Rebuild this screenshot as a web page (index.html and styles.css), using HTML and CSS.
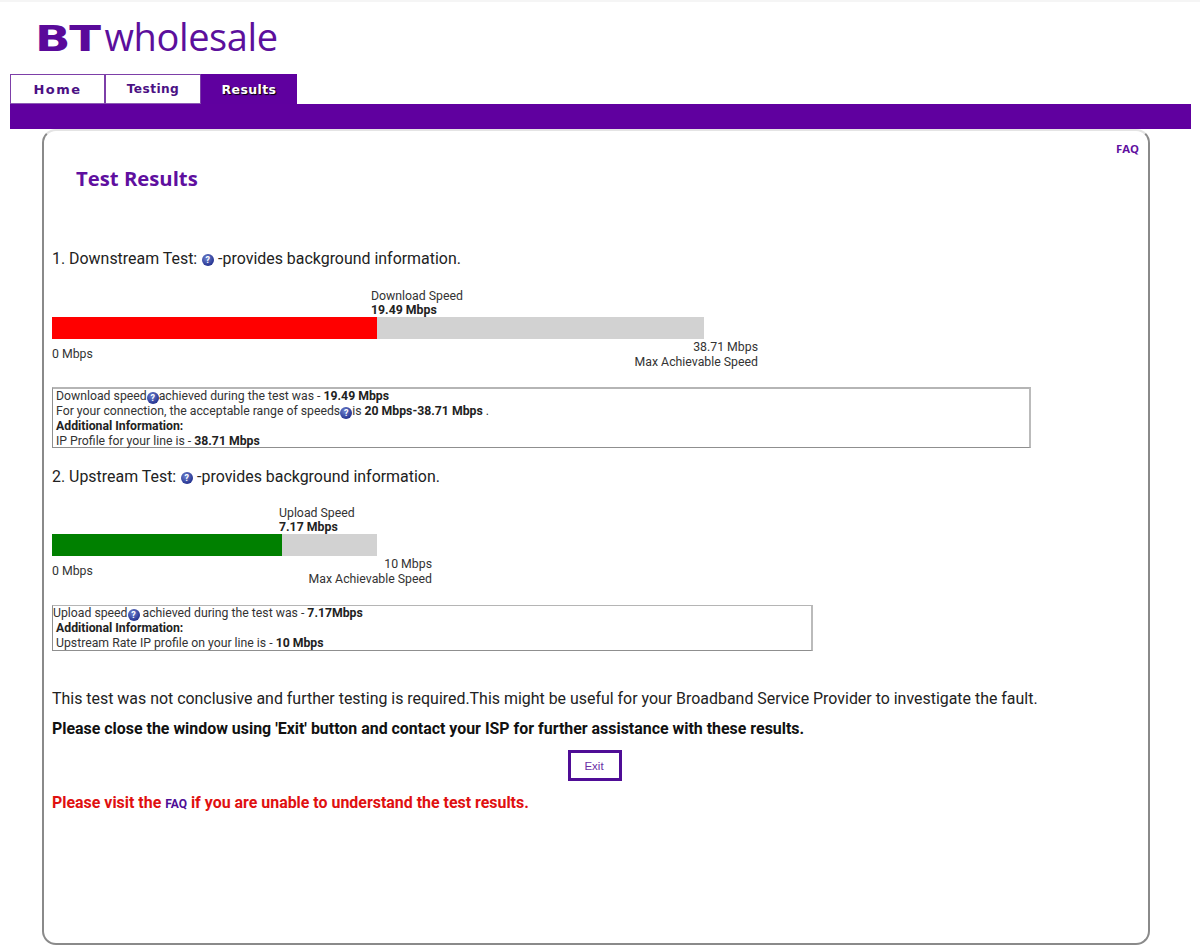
FILE: index.html
```html
<!DOCTYPE html>
<html lang="en">
<head>
<meta charset="utf-8">
<title>BT Wholesale - Test Results</title>
<link rel="stylesheet" href="styles.css">
</head>
<body>
<header class="brand">
  <span class="brand-bt">BT</span><span class="brand-name">wholesale</span>
</header>
<nav class="tabs">
  <a class="tab tab-home">Home</a>
  <a class="tab tab-testing">Testing</a>
  <a class="tab tab-active">Results</a>
</nav>
<div class="band"></div>
<main class="panel">
  <a class="faq-top">FAQ</a>
  <h1 class="title">Test Results</h1>

  <h2 class="test-head test-down">1. Downstream Test: <span class="help help-lg">?</span> -provides background information.</h2>
  <div class="meter meter-down">
    <div class="meter-label" style="padding-left:319px">Download Speed<br><b>19.49 Mbps</b></div>
    <div class="track" style="width:652px"><div class="fill fill-red" style="width:325px"></div></div>
    <div class="scale"><span>0 Mbps</span><span class="scale-max">38.71 Mbps<br>Max Achievable Speed</span></div>
  </div>
  <div class="info info-down">
    Download speed<span class="help">?</span>achieved during the test was - <b>19.49 Mbps</b><br>
    For your connection, the acceptable range of speeds<span class="help">?</span>is <b>20 Mbps-38.71 Mbps</b> .<br>
    <b>Additional Information:</b><br>
    IP Profile for your line is - <b>38.71 Mbps</b>
  </div>

  <h2 class="test-head test-up">2. Upstream Test: <span class="help help-lg">?</span> -provides background information.</h2>
  <div class="meter meter-up">
    <div class="meter-label" style="padding-left:227px">Upload Speed<br><b>7.17 Mbps</b></div>
    <div class="track" style="width:325px"><div class="fill fill-green" style="width:230px"></div></div>
    <div class="scale"><span>0 Mbps</span><span class="scale-max">10 Mbps<br>Max Achievable Speed</span></div>
  </div>
  <div class="info info-up">
    <span class="flush">Upload speed</span><span class="help">?</span> achieved during the test was - <b>7.17Mbps</b><br>
    <b>Additional Information:</b><br>
    Upstream Rate IP profile on your line is - <b>10 Mbps</b>
  </div>

  <p class="verdict">This test was not conclusive and further testing is required.This might be useful for your Broadband Service Provider to investigate the fault.</p>
  <p class="advice">Please close the window using 'Exit' button and contact your ISP for further assistance with these results.</p>
  <div class="exit-row"><button class="exit" type="button">Exit</button></div>
  <p class="visit">Please visit the <a class="faq-inline">FAQ</a> if you are unable to understand the test results.</p>
</main>
</body>
</html>
```

FILE: styles.css
```css
* { box-sizing: border-box; }
html, body { margin: 0; padding: 0; background: #fff; }
body {
  height: 950px;
  overflow: hidden;
  font-family: Roboto, "Liberation Sans", sans-serif;
  color: #222;
  border-top: 2px solid #f5f5f5;
}

.brand {
  height: 72px;
  padding: 12px 0 0 35px;
  display: flex;
  align-items: baseline;
  color: #5c0f9c;
  line-height: 44px;
}
.brand-bt {
  display: inline-block;
  font-family: "DejaVu Sans", sans-serif;
  font-weight: 700;
  font-size: 35px;
  letter-spacing: -1px;
  color: #5a0a9a;
  margin-right: 21px;
  transform: scaleX(1.33);
  transform-origin: left center;
}
.brand-name {
  font-family: "Open Sans", sans-serif;
  font-size: 38px;
  letter-spacing: -0.4px;
}

.tabs {
  display: flex;
  margin-left: 10px;
  height: 30px;
}
.tab {
  width: 95px;
  border: 1px solid #7d3fa8;
  border-bottom: 1px solid #8d5bb5;
  background: #fff;
  color: #4b1184;
  font-family: "DejaVu Sans", sans-serif;
  font-weight: 700;
  font-size: 13px;
  letter-spacing: 0.4px;
  display: flex;
  align-items: center;
  justify-content: center;
}
.tab-home { letter-spacing: 1.5px; }
.tab-testing { width: 96px; font-size: 12.2px; }
.tab-active {
  width: 96px;
  font-size: 12.5px;
  background: #5f009f;
  color: #fff;
  border-color: #5f009f;
  text-shadow: 1px 1px 1px #000;
}
.band {
  margin-left: 10px;
  width: 1181px;
  height: 25px;
  background: #60009f;
}

.panel {
  position: relative;
  margin-left: 42px;
  width: 1108px;
  height: 816px;
  border: 2px solid #8a8a8a;
  border-top-color: #e4e4e4;
  border-radius: 14px;
  padding: 0 8px;
}
.faq-top {
  position: absolute;
  top: 10px;
  right: 9px;
  font-family: "Open Sans", sans-serif;
  font-weight: 700;
  font-size: 11.3px;
  color: #5f0f9f;
}
.title {
  margin: 32px 0 0 24px;
  font-family: "Open Sans", sans-serif;
  font-size: 20.3px;
  line-height: 30px;
  font-weight: 700;
  color: #5f0f9f;
}
.test-head {
  margin: 0;
  font-weight: 400;
  font-size: 15.93px;
  line-height: 20px;
  color: #222;
}
.test-down { margin-top: 56px; }
.test-up { margin-top: 19px; }

.meter { margin-top: 20px; width: 706px; font-size: 12.3px; line-height: 14px; color: #333; }
.meter-up { margin-top: 19px; width: 380px; }
.meter-label b { color: #222; }
.track { height: 22px; background: #d2d2d2; }
.fill { height: 100%; }
.fill-red { background: #ff0000; }
.fill-green { background: #008000; }
.scale { display: flex; justify-content: space-between; align-items: center; height: 30px; line-height: 15px; }
.scale-max { text-align: right; margin-top: 2px; }

.info {
  margin-top: 18px;
  border: 1px solid #8f8f8f;
  border-top: 2px solid #b5b5b5;
  border-right: 2px solid #bbb;
  padding: 0 0 0 3px;
  font-size: 12.25px;
  line-height: 14.6px;
  color: #333;
}
.info b { color: #222; }
.info-down { width: 979px; height: 61px; }
.info-up { width: 761px; height: 46px; margin-top: 19px; border-top-width: 1px; }
.flush { margin-left: -3px; }

.help {
  display: inline-block;
  width: 12px;
  height: 12px;
  border-radius: 50%;
  background: radial-gradient(circle at 40% 35%, #6f83cf, #23318f 75%);
  color: #fff;
  font-size: 9px;
  font-weight: 700;
  line-height: 12px;
  text-align: center;
  vertical-align: -1px;
}
.help-lg { margin: 0 0.5px; vertical-align: 1px; }

.verdict { margin: 38px 0 0; font-size: 15.93px; line-height: 20px; color: #222; }
.advice { margin: 10px 0 0; font-size: 15.93px; line-height: 20px; font-weight: 700; color: #111; }
.exit-row { margin-top: 11px; display: flex; justify-content: center; padding-right: 2px; }
.exit {
  width: 54px;
  height: 31px;
  background: #fff;
  border: 3px solid #4f0d96;
  color: #6b2fa5;
  font-family: "Liberation Sans", sans-serif;
  font-size: 11.5px;
  padding: 0 2px 0 0;
}
.visit { margin: 12px 0 0; font-size: 15.93px; line-height: 20px; font-weight: 700; color: #e01010; }
.faq-inline { font-size: 12px; color: #4f0d96; }
```
